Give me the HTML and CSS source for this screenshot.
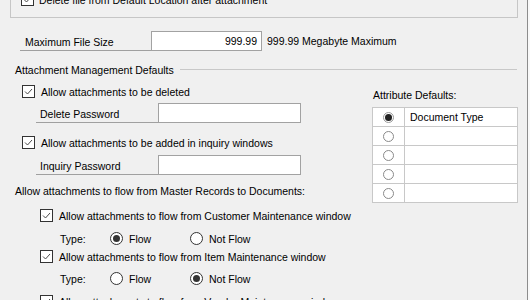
FILE: index.html
```html
<!DOCTYPE html>
<html>
<head>
  <title>Document Attachment Setup</title>
  <link rel="stylesheet" href="styles.css">
</head>
<body>
  <div class="window">
    <div class="groupbox">
      <div class="check-row">
        <span class="checkbox"><svg viewBox="0 0 11 11"><polyline points="2,5.5 4.5,8 9,3"/></svg></span>
        <span>Delete file from Default Location after attachment</span>
      </div>
    </div>

    <div class="prompt-row filesize">
      <span class="prompt prompt-size">Maximum File Size</span>
      <span class="field field-size">999.99</span>
      <span class="hint">999.99 Megabyte Maximum</span>
    </div>

    <div class="section-title">Attachment Management Defaults</div>

    <div class="defaults">
      <div class="defaults-left">
        <div class="check-row cb-delete">
          <span class="checkbox"><svg viewBox="0 0 11 11"><polyline points="2,5.5 4.5,8 9,3"/></svg></span>
          <span>Allow attachments to be deleted</span>
        </div>
        <div class="prompt-row pw-delete">
          <span class="prompt prompt-pw">Delete Password</span>
          <span class="field field-pw"></span>
        </div>
        <div class="check-row cb-inquiry">
          <span class="checkbox"><svg viewBox="0 0 11 11"><polyline points="2,5.5 4.5,8 9,3"/></svg></span>
          <span>Allow attachments to be added in inquiry windows</span>
        </div>
        <div class="prompt-row pw-inquiry">
          <span class="prompt prompt-pw">Inquiry Password</span>
          <span class="field field-pw"></span>
        </div>

        <div class="flow-title">Allow attachments to flow from Master Records to Documents:</div>

        <div class="check-row cb-flow cb-customer">
          <span class="checkbox"><svg viewBox="0 0 11 11"><polyline points="2,5.5 4.5,8 9,3"/></svg></span>
          <span>Allow attachments to flow from Customer Maintenance window</span>
        </div>
        <div class="type-row type-customer">
          <span class="type-label">Type:</span>
          <span class="option"><span class="radio on"></span>Flow</span>
          <span class="option"><span class="radio"></span>Not Flow</span>
        </div>
        <div class="check-row cb-flow cb-item">
          <span class="checkbox"><svg viewBox="0 0 11 11"><polyline points="2,5.5 4.5,8 9,3"/></svg></span>
          <span>Allow attachments to flow from Item Maintenance window</span>
        </div>
        <div class="type-row type-item">
          <span class="type-label">Type:</span>
          <span class="option"><span class="radio"></span>Flow</span>
          <span class="option"><span class="radio on"></span>Not Flow</span>
        </div>
        <div class="check-row cb-flow cb-vendor">
          <span class="checkbox"><svg viewBox="0 0 11 11"><polyline points="2,5.5 4.5,8 9,3"/></svg></span>
          <span>Allow attachments to flow from Vendor Maintenance window</span>
        </div>
      </div>

      <div class="attributes">
        <div class="attributes-title">Attribute Defaults:</div>
        <div class="attr-grid">
          <div class="attr-pick"><span class="grid-radio on"></span></div>
          <div class="attr-name">Document Type</div>
          <div class="attr-pick"><span class="grid-radio"></span></div>
          <div class="attr-name"></div>
          <div class="attr-pick"><span class="grid-radio"></span></div>
          <div class="attr-name"></div>
          <div class="attr-pick"><span class="grid-radio"></span></div>
          <div class="attr-name"></div>
          <div class="attr-pick"><span class="grid-radio"></span></div>
          <div class="attr-name"></div>
        </div>
      </div>
    </div>
  </div>
</body>
</html>
```

FILE: styles.css
```css
body {
  margin: 0;
  background: #f9f9f9;
  font-family: "Liberation Sans", Arial, sans-serif;
  font-size: 10.5px;
  color: #000;
}

.window {
  width: 527px;
  height: 300px;
  overflow: hidden;
  background: #f0f0f0;
  border-right: 1px solid #8c8c8c;
}

/* group box cut off at the top of the view */
.groupbox {
  height: 38px;
  margin: -22px 9px 0 10px;
  padding-left: 10px;
  border: 1px solid #c6c6c6;
}

.groupbox .check-row {
  margin-top: 14px;
  gap: 5px;
}

.check-row {
  display: flex;
  align-items: center;
  gap: 6px;
  height: 13px;
  white-space: nowrap;
}

.checkbox {
  display: flex;
  flex-shrink: 0;
  width: 13px;
  height: 13px;
  box-sizing: border-box;
  border: 1px solid #333;
  background: #fff;
}

.checkbox svg {
  width: 11px;
  height: 11px;
  fill: none;
  stroke: #4a4a4a;
  stroke-width: 1;
}

.prompt-row {
  display: flex;
  align-items: center;
  height: 20px;
}

.prompt {
  display: flex;
  align-items: center;
  height: 20px;
  box-sizing: border-box;
  padding-top: 3px;
  border-bottom: 1px solid #a0a0a0;
}

.field {
  height: 20px;
  box-sizing: border-box;
  border: 1px solid #a2a2a2;
  background: #fff;
  line-height: 18px;
}

.filesize {
  margin: 13px 0 0 20px;
}

.prompt-size {
  width: 131px;
  padding-left: 5px;
}

.field-size {
  width: 111px;
  padding-right: 4px;
  text-align: right;
}

.hint {
  margin-left: 5px;
}

.section-title {
  display: flex;
  align-items: center;
  height: 15px;
  margin: 11px 10px 0 15px;
  white-space: nowrap;
}

.section-title::after {
  content: "";
  flex: 1;
  height: 1px;
  margin-left: 6px;
  background: #c8c8c8;
}

.defaults {
  display: flex;
  align-items: flex-start;
}

.defaults-left {
  flex: 1;
}

.cb-delete {
  margin: 8px 0 0 22px;
}

.pw-delete {
  margin: 5px 0 0 36px;
}

.cb-inquiry {
  margin: 13px 0 0 22px;
}

.pw-inquiry {
  margin: 6px 0 0 36px;
}

.prompt-pw {
  width: 122px;
  padding-left: 4px;
}

.field-pw {
  width: 143px;
}

.flow-title {
  height: 14px;
  line-height: 14px;
  margin: 9px 0 0 15px;
  white-space: nowrap;
}

.cb-flow {
  margin-left: 40px;
}

.cb-customer {
  margin-top: 11px;
}

.cb-item {
  margin-top: 5px;
}

.cb-vendor {
  margin-top: 10px;
}

.type-row {
  display: flex;
  align-items: center;
  height: 13px;
  margin-left: 60px;
}

.type-customer {
  margin-top: 10px;
}

.type-item {
  margin-top: 9px;
}

.type-label {
  width: 50px;
}

.option {
  display: flex;
  align-items: center;
  gap: 6px;
  width: 80px;
}

.radio {
  display: flex;
  align-items: center;
  justify-content: center;
  width: 13px;
  height: 13px;
  box-sizing: border-box;
  border: 1px solid #333;
  border-radius: 50%;
  background: #fff;
}

.radio.on::after {
  content: "";
  width: 7px;
  height: 7px;
  border-radius: 50%;
  background: #333;
}

.attributes {
  flex-shrink: 0;
  width: 146px;
  margin-right: 9px;
}

.attributes-title {
  height: 14px;
  line-height: 14px;
  margin: 11px 0 0 1px;
}

.attr-grid {
  display: grid;
  grid-template-columns: 31px 1fr;
  grid-auto-rows: 18px;
  gap: 1px;
  margin-top: 5px;
  padding: 1px;
  background: #c8c8c8;
}

.attr-pick,
.attr-name {
  display: flex;
  align-items: center;
  background: #fff;
}

.attr-pick {
  justify-content: center;
}

.attr-name {
  padding-left: 5px;
}

.grid-radio {
  display: flex;
  align-items: center;
  justify-content: center;
  width: 11px;
  height: 11px;
  box-sizing: border-box;
  border: 1px solid #8a8a8a;
  border-radius: 50%;
  background: #fff;
}

.grid-radio.on {
  border-color: #9a9a9a;
}

.grid-radio.on::after {
  content: "";
  width: 7px;
  height: 7px;
  border-radius: 50%;
  background: #222;
}
```
